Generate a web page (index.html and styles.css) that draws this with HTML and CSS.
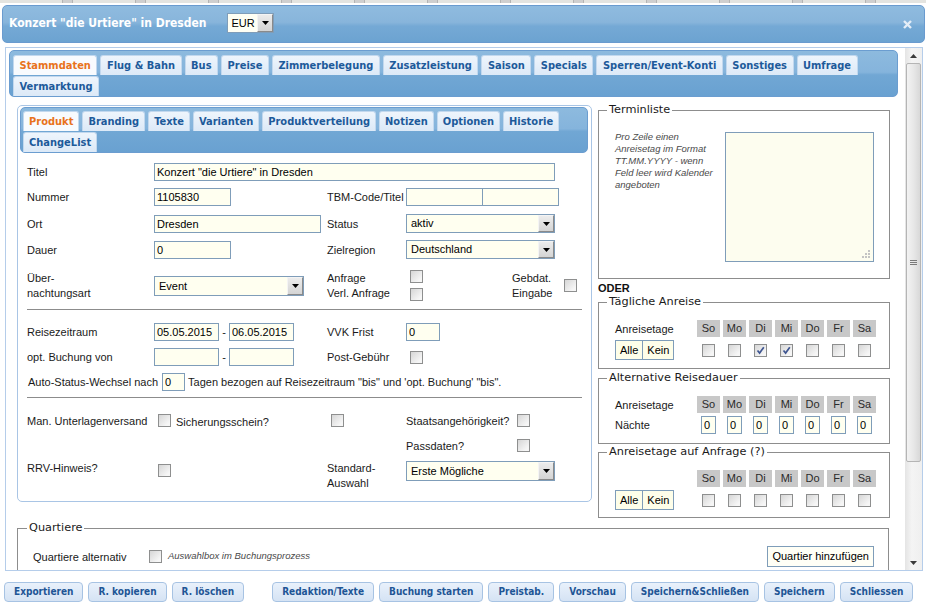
FILE: index.html
```html
<!DOCTYPE html>
<html lang="de">
<head>
<meta charset="utf-8">
<title>Konzert "die Urtiere" in Dresden</title>
<link rel="stylesheet" href="styles.css">
</head>
<body>
<div class="topstrip"></div>
<div class="window">
  <header class="win-header">
    <h1 class="win-title">Konzert "die Urtiere" in Dresden</h1>
    <div class="sel sel-cur"><span class="sel-text">EUR</span><span class="sel-btn"><svg width="7" height="4" viewBox="0 0 7 4"><path d="M0 0h7L3.5 4z"/></svg></span></div>
    <svg class="win-close" width="9" height="9" viewBox="0 0 9 9"><path d="M1 1L8 8M8 1L1 8"/></svg>
  </header>

  <div class="win-frame">
    <div class="scroll-area">
      <nav class="tabbar main-tabs">
        <span class="tab active">Stammdaten</span>
        <span class="tab">Flug &amp; Bahn</span>
        <span class="tab">Bus</span>
        <span class="tab">Preise</span>
        <span class="tab">Zimmerbelegung</span>
        <span class="tab">Zusatzleistung</span>
        <span class="tab">Saison</span>
        <span class="tab">Specials</span>
        <span class="tab">Sperren/Event-Konti</span>
        <span class="tab">Sonstiges</span>
        <span class="tab">Umfrage</span>
        <span class="tab">Vermarktung</span>
      </nav>

      <div class="main-area">
        <section class="left-panel">
          <nav class="tabbar sub-tabs">
            <span class="tab active">Produkt</span>
            <span class="tab">Branding</span>
            <span class="tab">Texte</span>
            <span class="tab">Varianten</span>
            <span class="tab">Produktverteilung</span>
            <span class="tab">Notizen</span>
            <span class="tab">Optionen</span>
            <span class="tab">Historie</span>
            <span class="tab">ChangeList</span>
          </nav>

          <div class="form">
            <div class="frow r1">
              <span class="lbl">Titel</span>
              <input class="inp w-titel" value='Konzert "die Urtiere" in Dresden'>
            </div>
            <div class="frow r2">
              <span class="lbl">Nummer</span>
              <input class="inp w77" value="1105830">
              <span class="lbl">TBM-Code/Titel</span>
              <div class="pair"><input class="inp w77" value=""><input class="inp w77 join" value=""></div>
            </div>
            <div class="frow r3">
              <span class="lbl">Ort</span>
              <input class="inp w167" value="Dresden">
              <span class="lbl">Status</span>
              <div class="sel w149"><span class="sel-text">aktiv</span><span class="sel-btn"><svg width="7" height="4" viewBox="0 0 7 4"><path d="M0 0h7L3.5 4z"/></svg></span></div>
            </div>
            <div class="frow r4">
              <span class="lbl">Dauer</span>
              <input class="inp w77" value="0">
              <span class="lbl">Zielregion</span>
              <div class="sel w149"><span class="sel-text">Deutschland</span><span class="sel-btn"><svg width="7" height="4" viewBox="0 0 7 4"><path d="M0 0h7L3.5 4z"/></svg></span></div>
            </div>
            <div class="frow r5">
              <span class="lbl lbl2">Über-<br>nachtungsart</span>
              <div class="sel w150 sel-tall"><span class="sel-text">Event</span><span class="sel-btn"><svg width="7" height="4" viewBox="0 0 7 4"><path d="M0 0h7L3.5 4z"/></svg></span></div>
              <span class="lbl lbl2">Anfrage<br>Verl. Anfrage</span>
              <div class="anfr">
                <div class="cbcol"><span class="cb"></span><span class="cb"></span></div>
                <span class="lbl lbl2 gebdat">Gebdat.<br>Eingabe</span>
                <span class="cb"></span>
              </div>
            </div>

            <hr class="sep">

            <div class="frow r6">
              <span class="lbl">Reisezeitraum</span>
              <div class="range"><input class="inp w65" value="05.05.2015"><span class="dash">-</span><input class="inp w65" value="06.05.2015"></div>
              <span class="lbl">VVK Frist</span>
              <input class="inp w34" value="0">
            </div>
            <div class="frow r7">
              <span class="lbl">opt. Buchung von</span>
              <div class="range"><input class="inp w65" value=""><span class="dash">-</span><input class="inp w65" value=""></div>
              <span class="lbl">Post-Gebühr</span>
              <div><span class="cb ml4"></span></div>
            </div>
            <div class="autorow">
              <span class="lbl">Auto-Status-Wechsel nach</span>
              <input class="inp w23" value="0">
              <span class="lbl">Tagen bezogen auf Reisezeitraum "bis" und 'opt. Buchung' "bis".</span>
            </div>

            <hr class="sep sep2">

            <div class="frow r9">
              <span class="lbl">Man. Unterlagenversand</span>
              <div class="inl"><span class="cb ml4"></span><span class="lbl sich">Sicherungsschein?</span></div>
              <div><span class="cb ml4"></span></div>
              <div class="inl"><span class="lbl w111">Staatsangehörigkeit?</span><span class="cb"></span></div>
            </div>
            <div class="frow r10">
              <span></span><span></span><span></span>
              <div class="inl"><span class="lbl w111">Passdaten?</span><span class="cb"></span></div>
            </div>
            <div class="frow r11">
              <span class="lbl rrv">RRV-Hinweis?</span>
              <div><span class="cb ml4 rrv-cb"></span></div>
              <span class="lbl lbl2">Standard-<br>Auswahl</span>
              <div class="sel w149 sel-std"><span class="sel-text">Erste Mögliche</span><span class="sel-btn"><svg width="7" height="4" viewBox="0 0 7 4"><path d="M0 0h7L3.5 4z"/></svg></span></div>
            </div>
          </div>
        </section>

        <aside class="right-col">
          <fieldset class="fs fs-termin">
            <legend>Terminliste</legend>
            <div class="termin-body">
              <p class="hint">Pro Zeile einen<br>Anreisetag im Format<br>TT.MM.YYYY - wenn<br>Feld leer wird Kalender<br>angeboten</p>
              <div class="ta"><svg class="grip" width="8" height="8" viewBox="0 0 8 8"><rect x="6" y="0" width="2" height="2"/><rect x="3" y="3" width="2" height="2"/><rect x="6" y="3" width="2" height="2"/><rect x="0" y="6" width="2" height="2"/><rect x="3" y="6" width="2" height="2"/><rect x="6" y="6" width="2" height="2"/></svg></div>
            </div>
          </fieldset>

          <div class="oder">ODER</div>

          <fieldset class="fs fs-days">
            <legend>Tägliche Anreise</legend>
            <div class="days">
              <span class="dl">Anreisetage</span>
              <span class="dh">So</span><span class="dh">Mo</span><span class="dh">Di</span><span class="dh">Mi</span><span class="dh">Do</span><span class="dh">Fr</span><span class="dh">Sa</span>
              <span class="ak"><span class="btn-s">Alle</span><span class="btn-s">Kein</span></span>
              <span class="dc"><span class="cb"></span></span>
              <span class="dc"><span class="cb"></span></span>
              <span class="dc"><span class="cb on"><svg width="11" height="11" viewBox="0 0 11 11"><path d="M2.5 5.5L4.6 8L8.8 2.2"/></svg></span></span>
              <span class="dc"><span class="cb on"><svg width="11" height="11" viewBox="0 0 11 11"><path d="M2.5 5.5L4.6 8L8.8 2.2"/></svg></span></span>
              <span class="dc"><span class="cb"></span></span>
              <span class="dc"><span class="cb"></span></span>
              <span class="dc"><span class="cb"></span></span>
            </div>
          </fieldset>

          <fieldset class="fs fs-alt">
            <legend>Alternative Reisedauer</legend>
            <div class="days days-alt">
              <span class="dl">Anreisetage</span>
              <span class="dh">So</span><span class="dh">Mo</span><span class="dh">Di</span><span class="dh">Mi</span><span class="dh">Do</span><span class="dh">Fr</span><span class="dh">Sa</span>
              <span class="dl">Nächte</span>
              <span class="dc"><input class="inp inp-n" value="0"></span>
              <span class="dc"><input class="inp inp-n" value="0"></span>
              <span class="dc"><input class="inp inp-n" value="0"></span>
              <span class="dc"><input class="inp inp-n" value="0"></span>
              <span class="dc"><input class="inp inp-n" value="0"></span>
              <span class="dc"><input class="inp inp-n" value="0"></span>
              <span class="dc"><input class="inp inp-n" value="0"></span>
            </div>
          </fieldset>

          <fieldset class="fs fs-anf">
            <legend>Anreisetage auf Anfrage (?)</legend>
            <div class="days">
              <span class="dl"></span>
              <span class="dh">So</span><span class="dh">Mo</span><span class="dh">Di</span><span class="dh">Mi</span><span class="dh">Do</span><span class="dh">Fr</span><span class="dh">Sa</span>
              <span class="ak"><span class="btn-s">Alle</span><span class="btn-s">Kein</span></span>
              <span class="dc"><span class="cb"></span></span>
              <span class="dc"><span class="cb"></span></span>
              <span class="dc"><span class="cb"></span></span>
              <span class="dc"><span class="cb"></span></span>
              <span class="dc"><span class="cb"></span></span>
              <span class="dc"><span class="cb"></span></span>
              <span class="dc"><span class="cb"></span></span>
            </div>
          </fieldset>
        </aside>
      </div>

      <fieldset class="fs fs-quart">
        <legend>Quartiere</legend>
        <div class="q-row">
          <span class="q-lbl">Quartiere alternativ</span>
          <span class="cb"></span>
          <span class="q-note">Auswahlbox im Buchungsprozess</span>
          <span class="btn-q">Quartier hinzufügen</span>
        </div>
        <div class="q-space"></div>
      </fieldset>
    </div>

    <div class="scrollbar">
      <div class="sb-arrow"><svg width="7" height="4" viewBox="0 0 7 4"><path d="M0 4h7L3.5 0z"/></svg></div>
      <div class="sb-thumb"><svg width="7" height="5" viewBox="0 0 7 5"><path d="M0 0.5h7M0 2.5h7M0 4.5h7"/></svg></div>
      <div class="sb-track"></div>
      <div class="sb-arrow"><svg width="7" height="4" viewBox="0 0 7 4"><path d="M0 0h7L3.5 4z"/></svg></div>
    </div>
  </div>

  <footer class="footer">
    <span class="fbtn">Exportieren</span>
    <span class="fbtn">R. kopieren</span>
    <span class="fbtn">R. löschen</span>
    <span class="fbtn gap">Redaktion/Texte</span>
    <span class="fbtn">Buchung starten</span>
    <span class="fbtn">Preistab.</span>
    <span class="fbtn">Vorschau</span>
    <span class="fbtn">Speichern&amp;Schließen</span>
    <span class="fbtn">Speichern</span>
    <span class="fbtn">Schliessen</span>
  </footer>
</div>
</body>
</html>
```

FILE: styles.css
```css
* { box-sizing: border-box; }
html, body { margin: 0; padding: 0; }
body {
  width: 926px;
  height: 603px;
  overflow: hidden;
  background: #fff;
  font-family: "Liberation Sans", Arial, sans-serif;
  font-size: 11px;
  color: #1a1a1a;
}

.topstrip {
  height: 3px;
  background: repeating-linear-gradient(90deg, #e4e4e0 0, #e4e4e0 62px, #b4b4b4 62px, #b4b4b4 63px, #cfcfcf 63px, #cfcfcf 72px, #b4b4b4 72px, #b4b4b4 73px);
}

.window { margin: 0 1px 0 2px; }

.win-header {
  display: flex;
  align-items: center;
  height: 38px;
  margin-top: 2px;
  padding: 0 0 2px 6px;
  border: 1px solid #6a9bcf;
  border-radius: 5px;
  background: linear-gradient(#8fbbdf 0%, #88b5db 45%, #75a9d5 56%, #6ca3d1 100%);
}
.win-title {
  margin: 0;
  font-family: "DejaVu Sans Condensed", "DejaVu Sans", sans-serif;
  font-stretch: condensed;
  font-weight: bold;
  font-size: 12px;
  color: #fff;
}
.win-close {
  margin: 3px 12px 0 auto;
  stroke: #e4edf7;
  stroke-width: 2.4;
  fill: none;
}

/* select */
.sel {
  display: flex;
  align-items: stretch;
  height: 19px;
  border: 1px solid #7f9db9;
  background: #fffff0;
  color: #000;
}
.sel-text { flex: 1; padding-left: 4px; line-height: 17px; white-space: nowrap; overflow: hidden; }
.sel-btn {
  width: 16px;
  display: flex;
  align-items: center;
  justify-content: center;
  border: 1px solid;
  border-color: #f4f4f4 #8a8a8a #8a8a8a #f4f4f4;
  background: linear-gradient(#ececec, #d4d4d4);
}
.sel-btn svg { fill: #000; }
.sel-cur { margin-left: 21px; width: 47px; height: 20px; background: #fffff4; }
.sel-cur .sel-text { padding-left: 3px; line-height: 18px; font-size: 11px; }
.sel-tall { height: 20px; }
.sel-tall .sel-text { line-height: 18px; }

/* frame */
.win-frame {
  display: flex;
  height: 524px;
  margin: 4px 2px 0 3px;
  border: 1px solid #b5cdea;
  background: #fff;
}
.scroll-area { flex: 1; overflow: hidden; padding: 2px 0 0 3px; }

/* tabs */
.tabbar {
  display: flex;
  flex-wrap: wrap;
  column-gap: 3px;
  row-gap: 1px;
  border: 1px solid #6b9dd0;
  border-radius: 5px;
  background: linear-gradient(#8dbade 0%, #85b4dc 47%, #71a7d4 53%, #69a1d1 100%);
}
.main-tabs { width: 889px; padding: 4px 3px 0; }
.sub-tabs { padding: 3px 3px 0 2px; }
.tab {
  height: 20px;
  line-height: 19px;
  padding: 0 5.5px;
  border: 1px solid #c2d8ee;
  border-bottom: none;
  border-radius: 3px 3px 0 0;
  background: linear-gradient(#eef5fc, #dce9f7);
  color: #1d5a9a;
  font-family: "DejaVu Sans Condensed", "DejaVu Sans", sans-serif;
  font-stretch: condensed;
  font-weight: bold;
  font-size: 11px;
  white-space: nowrap;
}
.sub-tabs .tab { padding: 0 5px; }
.tab.active { background: #f8fbfe; color: #e8731c; }

/* main area */
.main-area { display: flex; align-items: flex-start; margin: 8px 0 0 8px; }
.left-panel {
  width: 575px;
  border: 1px solid #a9c5e5;
  border-radius: 5px;
  padding: 1px 3px 0 2px;
}
.form { padding: 10px 6px 10px 7px; }

.frow {
  display: grid;
  grid-template-columns: 127px 173px 79px 176px;
  align-items: center;
  height: 18px;
}
.r2 { margin-top: 7px; }
.r3 { margin-top: 8px; }
.r4 { margin-top: 8px; }
.r5 { margin-top: 12px; height: 31px; }
.r6 { margin-top: 13px; }
.r7 { margin-top: 7px; }
.r9 { margin-top: 15px; height: 14px; }
.r10 { margin-top: 12px; height: 13px; }
.r11 { margin-top: 9px; height: 30px; align-items: start; }

.lbl { white-space: nowrap; color: #1a1a1a; }
.lbl2 { line-height: 15px; }
.rrv { line-height: 15px; margin-top: 0; }
.rrv-cb { margin-top: 3px; }

.inp {
  display: block;
  height: 18px;
  margin: 0;
  padding: 0 2px;
  border: 1px solid #7f9db9;
  background: #fffff0;
  font-family: "Liberation Sans", Arial, sans-serif;
  font-size: 11px;
  color: #000;
  outline: none;
}
.w-titel { grid-column: 2 / 5; width: 401px; }
.w77 { width: 77px; }
.w167 { width: 167px; }
.w149 { width: 149px; }
.w150 { width: 150px; }
.w65 { width: 65px; }
.w34 { width: 34px; }
.w23 { width: 23px; }

.pair { display: flex; }
.join { margin-left: -1px; }

.anfr { display: flex; align-items: center; height: 31px; }
.cbcol { display: flex; flex-direction: column; gap: 5px; margin-left: 4px; }
.gebdat { width: 52px; margin-left: 89px; }

.range { display: flex; align-items: center; }
.dash { width: 10px; text-align: center; }

.autorow { display: flex; align-items: center; height: 18px; margin-top: 7px; padding-left: 1px; }
.autorow .inp { margin: 0 3px 0 4px; }

.sep { height: 0; margin: 8px 0 0; border: 0; border-top: 1px solid #8c8c8c; }
.sep2 { margin-top: 6px; }

.inl { display: flex; align-items: center; }
.sich { margin-left: 5px; padding-top: 3px; }
.w111 { width: 111px; }
.sel-std { height: 20px; }
.sel-std .sel-text { line-height: 18px; }

/* checkbox */
.cb {
  display: inline-flex;
  align-items: center;
  justify-content: center;
  width: 13px;
  height: 13px;
  flex: none;
  border: 1px solid #8e8f8f;
  background: linear-gradient(135deg, #d6d6d6, #f6f6f6 80%);
  vertical-align: middle;
}
.cb.on svg { fill: none; stroke: #3e5590; stroke-width: 1.7; }
.ml4 { margin-left: 4px; }

/* right column */
.right-col { width: 292px; margin: -2px 0 0 6px; }
.fs { margin: 0; min-width: 0; border: 1px solid #8d8d8d; }
.fs legend {
  margin-left: -8px;
  padding: 0 2px;
  font-family: "DejaVu Sans", sans-serif;
  font-size: 11.3px;
  line-height: 14px;
  color: #1a1a1a;
}
.fs-termin { padding: 14px 15px 16px 16px; }
.termin-body { display: flex; }
.hint {
  width: 110px;
  margin: 0;
  font-style: italic;
  font-size: 9.5px;
  line-height: 12px;
  color: #4a4a4a;
  white-space: nowrap;
}
.ta {
  display: flex;
  align-items: flex-end;
  justify-content: flex-end;
  width: 150px;
  height: 130px;
  margin-top: 1px;
  padding: 0 3px 3px 0;
  border: 1px solid #7f9db9;
  background: #fdfdef;
}
.grip { fill: #c4c4c4; }

.oder { margin-top: 2px; line-height: 14px; font-weight: bold; font-size: 11px; color: #111; }

.fs-days { padding: 11px 10px 8px 16px; }
.fs-alt { margin-top: 2px; padding: 11px 10px 9px 16px; }
.fs-anf { margin-top: 1px; padding: 11px 10px 7px 16px; }

.days {
  display: grid;
  grid-template-columns: 79px repeat(7, 23px);
  grid-template-rows: 17px 20px;
  column-gap: 3px;
  row-gap: 3px;
  align-items: center;
}
.days-alt { grid-template-rows: 17px 18px; }
.dl { white-space: nowrap; }
.dh {
  height: 17px;
  line-height: 17px;
  text-align: center;
  background: #c8c8c8;
  color: #2a2a2a;
}
.dc { display: flex; align-items: center; justify-content: center; }
.ak { display: flex; }
.btn-s {
  height: 20px;
  line-height: 18px;
  padding: 0 4px;
  border: 1px solid #7f9db9;
  background: #fefee9;
  color: #000;
}
.btn-s + .btn-s { margin-left: -1px; }
.inp-n { width: 15px; padding: 0 0 0 2px; }

/* Quartiere */
.fs-quart { width: 872px; margin: 3px 0 0 8px; padding: 11px 14px 20px 15px; }
.fs-quart legend { margin-left: -6px; }
.q-row { display: flex; align-items: center; height: 21px; }
.q-lbl { width: 116px; white-space: nowrap; }
.q-note { margin-left: 6px; font-style: italic; font-size: 9.5px; color: #4a4a4a; padding-bottom: 2px; }
.btn-q {
  margin-left: auto;
  height: 21px;
  line-height: 19px;
  padding: 0 4px;
  border: 1px solid #7f9db9;
  background: #fffff6;
  color: #000;
}
.q-space { height: 20px; }

/* scrollbar */
.scrollbar {
  display: flex;
  flex-direction: column;
  width: 17px;
  background: linear-gradient(90deg, #e4e4e4, #f4f4f4 40%, #efefef);
}
.sb-arrow { display: flex; align-items: center; justify-content: center; height: 15px; }
.sb-arrow svg { fill: #3a3a3a; }
.sb-thumb {
  display: flex;
  align-items: center;
  justify-content: center;
  height: 399px;
  margin: 0 1px;
  border: 1px solid #b5b5b5;
  border-radius: 2px;
  background: linear-gradient(90deg, #f3f3f3, #e6e6e6 55%, #d8d8d8);
}
.sb-thumb svg { stroke: #7a7a7a; stroke-width: 1; }
.sb-track { flex: 1; }

/* footer */
.footer { display: flex; gap: 5px; padding: 11px 0 0 2px; }
.fbtn {
  height: 20px;
  line-height: 18px;
  padding: 0 9px;
  border: 1px solid #a7c3e3;
  border-radius: 4px;
  background: linear-gradient(#e9f1fb, #d5e3f4);
  color: #1e5595;
  font-family: "DejaVu Sans Condensed", "DejaVu Sans", sans-serif;
  font-stretch: condensed;
  font-weight: bold;
  font-size: 10px;
  white-space: nowrap;
}
.fbtn.gap { margin-left: 23px; }
```
